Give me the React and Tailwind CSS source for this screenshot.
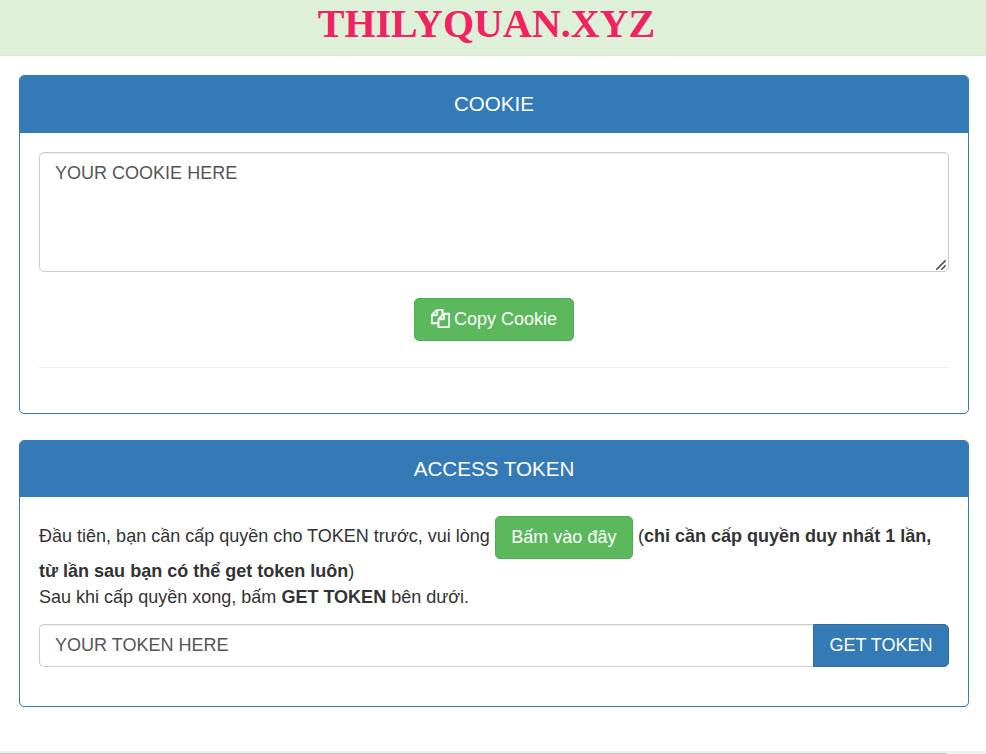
function Panel({ title, className, headerClassName, children }) {
  return (
    <section className={`ml-[19px] mr-[17px] rounded-[5px] border border-[#337ab7] bg-white shadow-[0_1px_1px_rgba(0,0,0,0.05)] ${className}`}>
      <h3 className={`flex items-center justify-center rounded-t-[4px] bg-[#337ab7] text-[20.6px] text-white ${headerClassName}`}>
        {title}
      </h3>
      {children}
    </section>
  );
}

function CopyIcon() {
  return (
    <svg className="-mt-px mr-1 size-[19px]" viewBox="0 0 1792 1792" fill="currentColor" stroke="currentColor" strokeWidth="60">
      <path d="M1696 384q40 0 68 28t28 68v1216q0 40-28 68t-68 28h-960q-40 0-68-28t-28-68v-288h-544q-40 0-68-28t-28-68v-672q0-40 20-88t48-76l408-408q28-28 76-48t88-20h416q40 0 68 28t28 68v328q68-40 128-40h416zm-544 213l-299 299h299v-299zm-640-384l-299 299h299v-299zm196 647l316-316v-416h-384v416q0 40-28 68t-68 28h-416v640h512v-256q0-40 20-88t48-76zm956 804v-1152h-384v416q0 40-28 68t-68 28h-416v640h896z" />
    </svg>
  );
}

export default function App() {
  return (
    <div className="flex h-[754px] flex-col overflow-hidden bg-white font-['Liberation_Sans',Arial,sans-serif] text-[18.03px] leading-[26px] text-[#333]">
      <header className="h-14 shrink-0 border-b border-[#d6e9c6] bg-[#dff0d8] pr-[13px] text-center font-['Liberation_Serif','Times_New_Roman',serif] text-[40px] font-bold leading-[48px] text-[#f02261]">
        <span>THILYQUAN.XYZ</span>
      </header>

      <Panel title="COOKIE" className="mt-[19px] h-[339px] shrink-0" headerClassName="h-[57px] pb-[2px]">
        <div className="px-[19px] pt-[19px]">
          <div className="relative">
            <textarea
              className="block h-[120px] w-full resize-none rounded-[5px] border border-[#ccc] px-[15px] py-[7px] text-[#555] shadow-[inset_0_1px_1px_rgba(0,0,0,0.075)] outline-none"
              defaultValue="YOUR COOKIE HERE"
            />
            <svg className="absolute bottom-[2px] right-[3px] size-[10px]" viewBox="0 0 10 10" fill="none" stroke="#555" strokeWidth="1.6">
              <path d="M.3 9.7 9.7.3M5.3 9.7 9.7 5.3" />
            </svg>
          </div>
          <div className="mt-[26px] flex justify-center">
            <button className="flex h-[43px] w-40 items-center justify-center rounded-[5px] border border-[#4cae4c] bg-[#5cb85c] pb-[2px] text-white">
              <CopyIcon />
              Copy Cookie
            </button>
          </div>
          <hr className="mt-[26px] border-[#eee]" />
        </div>
      </Panel>

      <Panel title="ACCESS TOKEN" className="mt-[26px] h-[267px] shrink-0" headerClassName="h-[56px] pb-0">
        <div className="px-[19px] pt-[19px]">
          <p className="whitespace-nowrap">
            Đầu tiên, bạn cần cấp quyền cho TOKEN trước, vui lòng{" "}
            <button className="-mb-px h-[43px] w-[138px] rounded-[5px] border border-[#4cae4c] bg-[#5cb85c] pb-[2px] align-middle text-white">
              Bấm vào đây
            </button>{" "}
            (<b>chỉ cần cấp quyền duy nhất 1 lần,</b>
            <br />
            <b>từ lần sau bạn có thể get token luôn</b>)
            <br />
            Sau khi cấp quyền xong, bấm <b>GET TOKEN</b> bên dưới.
          </p>
          <div className="mt-[14px] flex h-[43px]">
            <input
              className="min-w-0 flex-1 rounded-l-[5px] border border-r-0 border-[#ccc] px-[15px] pb-[2px] text-[#555] shadow-[inset_0_1px_1px_rgba(0,0,0,0.075)] outline-none"
              defaultValue="YOUR TOKEN HERE"
            />
            <button className="w-[136px] rounded-r-[5px] border border-[#2e6da4] bg-[#337ab7] pb-[2px] text-white">GET TOKEN</button>
          </div>
        </div>
      </Panel>

      <div className="mt-auto h-[3px] bg-[#f1f1f1] pt-[2px]">
        <div className="h-px w-[947px] bg-[#c1c1c1]" />
      </div>
    </div>
  );
}
